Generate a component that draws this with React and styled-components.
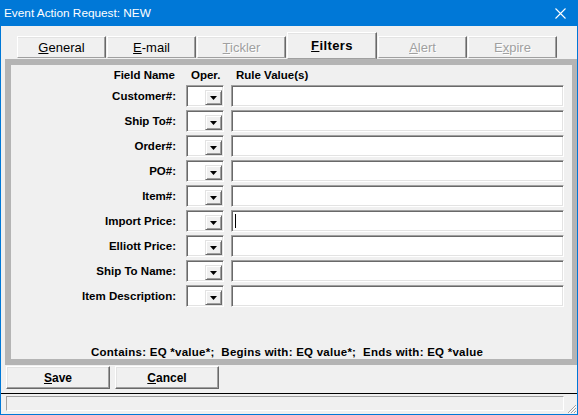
import React from "react";
import styled, { createGlobalStyle } from "styled-components";

const GlobalStyle = createGlobalStyle`
  html, body { margin: 0; padding: 0; background: #ffffff; }
  * { box-sizing: border-box; }
`;

const Window = styled.div`
  width: 578px;
  height: 415px;
  border: 1px solid #0078d7;
  border-top: none;
  display: flex;
  flex-direction: column;
  font-family: "Liberation Sans", Arial, sans-serif;
  background: #f0f0f0;
  overflow: hidden;
`;

const TitleBar = styled.div`
  height: 26px;
  background: #0078d7;
  margin: 0 -1px;
  padding: 0 12px 0 4px;
  display: flex;
  align-items: center;
  justify-content: space-between;
  color: #ffffff;
  font-size: 11.8px;
  flex-shrink: 0;
`;

const CloseIcon = styled.svg`
  width: 11px;
  height: 11px;
  margin-top: 1px;
`;

const TabStrip = styled.div`
  height: 27px;
  margin-top: 6px;
  padding-left: 16px;
  display: flex;
  align-items: flex-end;
  gap: 1px;
  flex-shrink: 0;
`;

const Tab = styled.div`
  width: ${(p) => (p.$active ? 90 : 89)}px;
  height: ${(p) => (p.$active ? 27 : 22)}px;
  margin-bottom: ${(p) => (p.$active ? 0 : 1)}px;
  border-top: 1px solid #ffffff;
  border-left: 1px solid #ffffff;
  border-right: 1px solid #696969;
  border-bottom: 1px solid #a0a0a0;
  box-shadow: inset -1px 0 0 #a0a0a0, inset 0 1px 0 #e3e3e3;
  background: #f0f0f0;
  display: flex;
  align-items: center;
  justify-content: center;
  font-size: 13px;
  font-weight: ${(p) => (p.$active ? 700 : 400)};
  letter-spacing: ${(p) => (p.$active ? "0.4px" : "0")};
  color: ${(p) => (p.$disabled ? "#a0a0a0" : "#000000")};
  text-shadow: ${(p) => (p.$disabled ? "1px 1px 0 #ffffff" : "none")};
  padding-top: ${(p) => (p.$active ? 0 : 1)}px;
`;

const Panel = styled.div`
  margin-left: 4px;
  width: 572px;
  height: 306px;
  border: 6px solid #b4b4b4;
  border-right-width: 5px;
  background: #f0f0f0;
  display: flex;
  flex-direction: column;
  flex-shrink: 0;
`;

const FormGrid = styled.div`
  display: grid;
  grid-template-columns: 175px 45px 333px;
  grid-template-rows: 17px repeat(9, 22px);
  row-gap: 3px;
`;

const HeadCell = styled.div`
  font-size: 11.5px;
  font-weight: 700;
  line-height: 14px;
  padding-top: 3px;
  text-align: ${(p) => (p.$right ? "right" : "left")};
  padding-right: ${(p) => (p.$right ? 11 : 0)}px;
  padding-left: ${(p) => p.$indent || 0}px;
  white-space: nowrap;
`;

const Label = styled.div`
  font-size: 11.5px;
  font-weight: 700;
  text-align: right;
  padding-right: 10px;
  display: flex;
  align-items: center;
  justify-content: flex-end;
  white-space: nowrap;
`;

const Combo = styled.div`
  width: 38px;
  height: 22px;
  border: 1px solid;
  border-color: #a0a0a0 #ffffff #ffffff #a0a0a0;
  box-shadow: inset 1px 1px 0 #696969, inset -1px -1px 0 #e3e3e3;
  background: #ffffff;
  display: flex;
  justify-content: flex-end;
  align-items: flex-end;
  padding: 0 1px 1px 0;
`;

const DropButton = styled.div`
  width: 17px;
  height: 15px;
  background: #f0f0f0;
  border-top: 1px solid #e3e3e3;
  border-left: 1px solid #e3e3e3;
  border-right: 1px solid #696969;
  border-bottom: 1px solid #696969;
  box-shadow: inset 1px 1px 0 #ffffff, inset -1px -1px 0 #a0a0a0;
  display: flex;
  align-items: center;
  justify-content: center;
`;

const TextField = styled.div`
  width: 333px;
  height: 22px;
  border: 1px solid;
  border-color: #a0a0a0 #ffffff #ffffff #a0a0a0;
  box-shadow: inset 1px 1px 0 #696969, inset -1px -1px 0 #e3e3e3;
  background: #ffffff;
  display: flex;
  align-items: center;
  padding-left: 3px;
`;

const Caret = styled.span`
  width: 1px;
  height: 14px;
  background: #000000;
`;

const Spacer = styled.div`
  flex: 1;
`;

const Footnote = styled.div`
  font-size: 11.5px;
  font-weight: 700;
  line-height: 13px;
  letter-spacing: 0.25px;
  padding-left: 80px;
  white-space: pre;
`;

const ButtonRow = styled.div`
  margin-top: 1px;
  height: 23px;
  padding-left: 5px;
  display: flex;
  gap: 5px;
  flex-shrink: 0;
`;

const Button = styled.div`
  width: 104px;
  height: 23px;
  border-top: 1px solid #ffffff;
  border-left: 1px solid #ffffff;
  border-right: 1px solid #696969;
  border-bottom: 1px solid #696969;
  box-shadow: inset -1px -1px 0 #a0a0a0, inset 1px 1px 0 #e3e3e3;
  background: #f0f0f0;
  display: flex;
  align-items: center;
  justify-content: center;
  font-size: 12px;
  font-weight: 700;
`;

const StatusArea = styled.div`
  margin-top: 4px;
  border-top: 1px solid #000000;
  height: 21px;
  padding-left: 5px;
  display: flex;
  align-items: flex-end;
  flex-shrink: 0;
`;

const StatusBox = styled.div`
  width: 558px;
  height: 15px;
  margin-bottom: 3px;
  border: 1px solid;
  border-color: #a0a0a0 #ffffff #ffffff #a0a0a0;
`;

const Grip = styled.svg`
  width: 12px;
  height: 12px;
  margin-left: 1px;
`;

const fields = [
  "Customer#:",
  "Ship To#:",
  "Order#:",
  "PO#:",
  "Item#:",
  "Import Price:",
  "Elliott Price:",
  "Ship To Name:",
  "Item Description:",
];

const tabs = [
  { k: "G", rest: "eneral" },
  { k: "E", rest: "-mail" },
  { k: "T", rest: "ickler", disabled: true },
  { k: "F", rest: "ilters", active: true },
  { k: "A", rest: "lert", disabled: true },
  { pre: "E", k: "x", rest: "pire", disabled: true },
];

export default function App() {
  return (
    <>
      <GlobalStyle />
      <Window>
        <TitleBar>
          <span>Event Action Request: NEW</span>
          <CloseIcon viewBox="0 0 11 11">
            <path d="M0.5 0.5 L10.5 10.5 M10.5 0.5 L0.5 10.5" stroke="#ffffff" strokeWidth="1.1" fill="none" />
          </CloseIcon>
        </TitleBar>
        <TabStrip>
          {tabs.map((t, i) => (
            <Tab key={i} $active={t.active} $disabled={t.disabled}>
              <span>
                {t.pre}
                <u>{t.k}</u>
                {t.rest}
              </span>
            </Tab>
          ))}
        </TabStrip>
        <Panel>
          <FormGrid>
            <HeadCell $right>Field Name</HeadCell>
            <HeadCell $indent={5}>Oper.</HeadCell>
            <HeadCell $indent={5}>Rule Value(s)</HeadCell>
            {fields.map((f) => (
              <React.Fragment key={f}>
                <Label>{f}</Label>
                <Combo>
                  <DropButton>
                    <svg width="7" height="4" viewBox="0 0 7 4">
                      <path d="M0 0 H7 L3.5 4 Z" fill="#000000" />
                    </svg>
                  </DropButton>
                </Combo>
                <TextField>{f === "Import Price:" && <Caret />}</TextField>
              </React.Fragment>
            ))}
          </FormGrid>
          <Spacer />
          <Footnote>{"Contains: EQ *value*;  Begins with: EQ value*;  Ends with: EQ *value"}</Footnote>
        </Panel>
        <ButtonRow>
          <Button>
            <span>
              <u>S</u>ave
            </span>
          </Button>
          <Button>
            <span>
              <u>C</u>ancel
            </span>
          </Button>
        </ButtonRow>
        <StatusArea>
          <StatusBox />
          <Grip viewBox="0 0 12 12">
            <path d="M11 3 L3 11 M11 6 L6 11 M11 9 L9 11" stroke="#a0a0a0" strokeWidth="1" fill="none" />
            <path d="M11 4 L4 11 M11 7 L7 11 M11 10 L10 11" stroke="#ffffff" strokeWidth="1" fill="none" />
          </Grip>
        </StatusArea>
      </Window>
    </>
  );
}
